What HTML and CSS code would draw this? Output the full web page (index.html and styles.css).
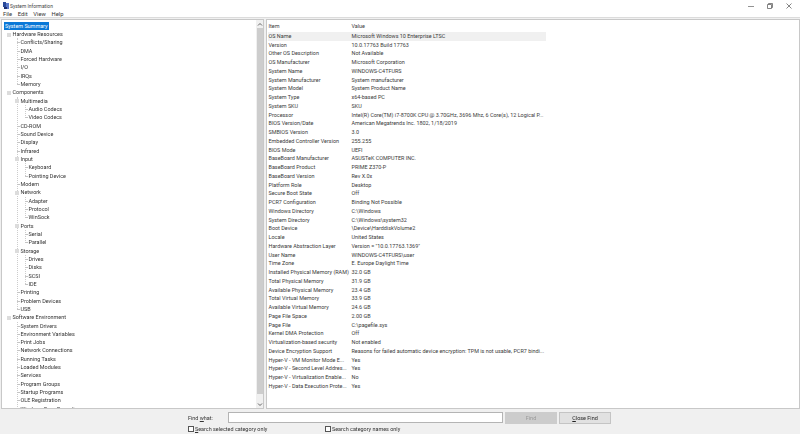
FILE: index.html
```html
<!DOCTYPE html>
<html lang="en">
<head>
<meta charset="utf-8">
<title>System Information</title>
<link rel="stylesheet" href="styles.css">
</head>
<body>
<div class="window">
  <header class="titlebar">
    <svg class="app-icon" width="6" height="7" viewBox="0 0 6 7"><rect x="0" y="0" width="3" height="5" fill="#2a4a9a"/><rect x="3" y="1" width="3" height="6" fill="#5a78c8"/><rect x="1" y="5" width="3" height="2" fill="#1c2f70"/></svg>
    <span class="title">System Information</span>
    <div class="controls">
      <svg width="6" height="6" viewBox="0 0 6 6"><path d="M0 3.500H6" stroke="#777" stroke-width=".8"/></svg>
      <svg width="6" height="6" viewBox="0 0 6 6"><path d="M.5 1.500h4v4h-4zM1.500 1.500v-1h4v4h-1" fill="none" stroke="#666" stroke-width=".8"/></svg>
      <svg width="6" height="6" viewBox="0 0 6 6"><path d="M.5.5l5 5M5.500.5l-5 5" stroke="#666" stroke-width=".8"/></svg>
    </div>
  </header>
  <nav class="menu"><span>File</span><span>Edit</span><span>View</span><span>Help</span></nav>
  <main class="panes">
    <section class="tree-pane">
      <div class="tree">
        <div class="node selected-row"><span class="selected">System Summary</span></div>
        <div class="node l1 exp">Hardware Resources</div>
        <div class="group g1">
          <div class="node l2">Conflicts/Sharing</div>
          <div class="node l2">DMA</div>
          <div class="node l2">Forced Hardware</div>
          <div class="node l2">I/O</div>
          <div class="node l2">IRQs</div>
          <div class="node l2">Memory</div>
        </div>
        <div class="node l1 exp">Components</div>
        <div class="group g1">
          <div class="node l2 exp">Multimedia</div>
          <div class="group g2">
            <div class="node l3">Audio Codecs</div>
            <div class="node l3">Video Codecs</div>
          </div>
          <div class="node l2">CD-ROM</div>
          <div class="node l2">Sound Device</div>
          <div class="node l2">Display</div>
          <div class="node l2">Infrared</div>
          <div class="node l2 exp">Input</div>
          <div class="group g2">
            <div class="node l3">Keyboard</div>
            <div class="node l3">Pointing Device</div>
          </div>
          <div class="node l2">Modem</div>
          <div class="node l2 exp">Network</div>
          <div class="group g2">
            <div class="node l3">Adapter</div>
            <div class="node l3">Protocol</div>
            <div class="node l3">WinSock</div>
          </div>
          <div class="node l2 exp">Ports</div>
          <div class="group g2">
            <div class="node l3">Serial</div>
            <div class="node l3">Parallel</div>
          </div>
          <div class="node l2 exp">Storage</div>
          <div class="group g2">
            <div class="node l3">Drives</div>
            <div class="node l3">Disks</div>
            <div class="node l3">SCSI</div>
            <div class="node l3">IDE</div>
          </div>
          <div class="node l2">Printing</div>
          <div class="node l2">Problem Devices</div>
          <div class="node l2">USB</div>
        </div>
        <div class="node l1 exp">Software Environment</div>
        <div class="group g1">
          <div class="node l2">System Drivers</div>
          <div class="node l2">Environment Variables</div>
          <div class="node l2">Print Jobs</div>
          <div class="node l2">Network Connections</div>
          <div class="node l2">Running Tasks</div>
          <div class="node l2">Loaded Modules</div>
          <div class="node l2">Services</div>
          <div class="node l2">Program Groups</div>
          <div class="node l2">Startup Programs</div>
          <div class="node l2">OLE Registration</div>
          <div class="node l2">Windows Error Reporting</div>
        </div>
      </div>
      <div class="scrollbar">
        <svg width="6" height="5" viewBox="0 0 6 5"><path d="M1 3.500L3 1.500L5 3.500" fill="none" stroke="#555" stroke-width=".9"/></svg>
        <div class="thumb"></div>
        <svg width="6" height="5" viewBox="0 0 6 5"><path d="M1 1.500L3 3.500L5 1.500" fill="none" stroke="#555" stroke-width=".9"/></svg>
      </div>
    </section>
    <section class="list-pane">
      <div class="list">
        <div class="row head"><span>Item</span><span>Value</span></div>
        <div class="row sel"><span>OS Name</span><span>Microsoft Windows 10 Enterprise LTSC</span></div>
        <div class="row"><span>Version</span><span>10.0.17763 Build 17763</span></div>
        <div class="row"><span>Other OS Description</span><span>Not Available</span></div>
        <div class="row"><span>OS Manufacturer</span><span>Microsoft Corporation</span></div>
        <div class="row"><span>System Name</span><span>WINDOWS-C4TFURS</span></div>
        <div class="row"><span>System Manufacturer</span><span>System manufacturer</span></div>
        <div class="row"><span>System Model</span><span>System Product Name</span></div>
        <div class="row"><span>System Type</span><span>x64-based PC</span></div>
        <div class="row"><span>System SKU</span><span>SKU</span></div>
        <div class="row"><span>Processor</span><span>Intel(R) Core(TM) i7-8700K CPU @ 3.70GHz, 3696 Mhz, 6 Core(s), 12 Logical P...</span></div>
        <div class="row"><span>BIOS Version/Date</span><span>American Megatrends Inc. 1802, 1/18/2019</span></div>
        <div class="row"><span>SMBIOS Version</span><span>3.0</span></div>
        <div class="row"><span>Embedded Controller Version</span><span>255.255</span></div>
        <div class="row"><span>BIOS Mode</span><span>UEFI</span></div>
        <div class="row"><span>BaseBoard Manufacturer</span><span>ASUSTeK COMPUTER INC.</span></div>
        <div class="row"><span>BaseBoard Product</span><span>PRIME Z370-P</span></div>
        <div class="row"><span>BaseBoard Version</span><span>Rev X.0x</span></div>
        <div class="row"><span>Platform Role</span><span>Desktop</span></div>
        <div class="row"><span>Secure Boot State</span><span>Off</span></div>
        <div class="row"><span>PCR7 Configuration</span><span>Binding Not Possible</span></div>
        <div class="row"><span>Windows Directory</span><span>C:\Windows</span></div>
        <div class="row"><span>System Directory</span><span>C:\Windows\system32</span></div>
        <div class="row"><span>Boot Device</span><span>\Device\HarddiskVolume2</span></div>
        <div class="row"><span>Locale</span><span>United States</span></div>
        <div class="row"><span>Hardware Abstraction Layer</span><span>Version = "10.0.17763.1369"</span></div>
        <div class="row"><span>User Name</span><span>WINDOWS-C4TFURS\user</span></div>
        <div class="row"><span>Time Zone</span><span>E. Europe Daylight Time</span></div>
        <div class="row"><span>Installed Physical Memory (RAM)</span><span>32.0 GB</span></div>
        <div class="row"><span>Total Physical Memory</span><span>31.9 GB</span></div>
        <div class="row"><span>Available Physical Memory</span><span>23.4 GB</span></div>
        <div class="row"><span>Total Virtual Memory</span><span>33.9 GB</span></div>
        <div class="row"><span>Available Virtual Memory</span><span>24.6 GB</span></div>
        <div class="row"><span>Page File Space</span><span>2.00 GB</span></div>
        <div class="row"><span>Page File</span><span>C:\pagefile.sys</span></div>
        <div class="row"><span>Kernel DMA Protection</span><span>Off</span></div>
        <div class="row"><span>Virtualization-based security</span><span>Not enabled</span></div>
        <div class="row"><span>Device Encryption Support</span><span>Reasons for failed automatic device encryption: TPM is not usable, PCR7 bindi...</span></div>
        <div class="row"><span>Hyper-V - VM Monitor Mode E...</span><span>Yes</span></div>
        <div class="row"><span>Hyper-V - Second Level Addres...</span><span>Yes</span></div>
        <div class="row"><span>Hyper-V - Virtualization Enable...</span><span>No</span></div>
        <div class="row"><span>Hyper-V - Data Execution Prote...</span><span>Yes</span></div>
      </div>
    </section>
  </main>
  <footer class="find">
    <div class="find-top">
      <label class="find-label" for="q">Find <u>w</u>hat:</label>
      <input class="find-input" id="q" type="text">
      <div class="btn disabled">Find</div>
      <div class="btn"><span><u>C</u>lose Find</span></div>
    </div>
    <div class="find-checks">
      <span class="check first"><i class="box"></i><span><u>S</u>earch selected category only</span></span>
      <span class="check"><i class="box"></i><span>Search category names only</span></span>
    </div>
  </footer>
</div>
</body>
</html>
```
FILE: styles.css
```css
* { box-sizing: border-box; }
html, body { margin: 0; padding: 0; }
body {
  width: 800px;
  height: 434px;
  overflow: hidden;
  background: #f0f0f0;
  font-family: Roboto, "Open Sans", "Liberation Sans", sans-serif;
  font-size: 5.450px;
  color: #333;
}
.window { width: 800px; height: 434px; display: flex; flex-direction: column; filter: blur(.25px); }
.titlebar {
  height: 10px;
  background: #fff;
  display: flex;
  align-items: center;
  padding: 1px 8px 0 3px;
  flex: none;
}
.app-icon { margin-right: 1px; flex: none; }
.title { color: #444; font-size: 4.900px; }
.controls { margin-left: auto; display: flex; gap: 13px; }
.menu {
  height: 8px;
  background: #fff;
  display: flex;
  align-items: center;
  padding: 0 0 0 3px;
  gap: 5.700px;
  flex: none;
  font-size: 5.800px;
  border-bottom: 1px solid #dcdcdc;
}
.panes { height: 391px; display: flex; padding: 1px 0 0 1px; flex: none; }
.tree-pane {
  width: 263px;
  background: #fff;
  border: 1px solid #c8c8c8;
  display: flex;
  overflow: hidden;
  flex: none;
}
.tree { flex: 1; padding: 1.700px 0 0 2px; overflow: hidden; }
.node {
  height: 8.330px;
  line-height: 8.330px;
  white-space: nowrap;
  position: relative;
}
.selected {
  display: inline-block;
  background: #0a78d7;
  color: #fff;
  padding: 0 1px;
  height: 8px;
  line-height: 8px;
}
.l1 { padding-left: 8.500px; }
.l2 { padding-left: 16.500px; }
.l3 { padding-left: 24.500px; }
.l2::before, .l3::before {
  content: "";
  position: absolute;
  top: 4px;
  width: 2px;
  border-top: 1px dotted #c4c4c4;
}
.l2::before { left: 13px; }
.l3::before { left: 21px; }
.exp::after {
  content: "";
  position: absolute;
  top: 2.500px;
  width: 4px;
  height: 4px;
  background: #dcdcdc;
}
.l1.exp::after { left: 2.500px; }
.l2.exp::after { left: 10.500px; }
.l2.exp::before { display: none; }
.group { position: relative; }
.group::before {
  content: "";
  position: absolute;
  top: 0;
  bottom: 4px;
  border-left: 1px dotted #ccc;
}
.g1::before { left: 13px; }
.g2::before { left: 21px; }
.scrollbar {
  width: 7px;
  background: #f0f0f0;
  display: flex;
  flex-direction: column;
  align-items: center;
  padding: 2px 0 1px;
  gap: 1px;
  flex: none;
}
.scrollbar svg { flex: none; }
.thumb { flex: 1; width: 6px; background: #cdcdcd; margin-bottom: 7px; }
.list-pane {
  flex: 1;
  margin-left: 2px;
  background: #fff;
  border: 1px solid #c8c8c8;
  padding: 2px 0 0 1px;
  overflow: hidden;
}
.list { width: 278px; }
.row {
  display: grid;
  grid-template-columns: 83px 1fr;
  height: 8.760px;
  line-height: 8.760px;
  padding-left: .5px;
  white-space: nowrap;
  color: #3a3a3a;
}
.row.head { height: 9.800px; line-height: 9.800px; }
.row.sel { background: #f0f0f0; }
.find { flex: 1; display: flex; flex-direction: column; padding: 2px 0 0 188px; }
.find-top { display: flex; align-items: center; height: 13px; }
.find-label { width: 40px; flex: none; }
.find-input {
  width: 275px;
  height: 10.500px;
  padding: 0;
  background: #fff;
  border: 1px solid #b4b4b4;
  flex: none;
  margin-right: 2px;
}
.btn {
  width: 52px;
  height: 12px;
  margin-right: 2px;
  background: #e1e1e1;
  border: 1px solid #c4c4c4;
  display: flex;
  align-items: center;
  justify-content: center;
  flex: none;
  color: #222;
}
.btn.disabled { background: #ccc; border-color: #ccc; color: #999; }
.find-checks { display: flex; margin-top: 0.500px; }
.check { display: flex; align-items: center; gap: 1px; line-height: 8px; }
.check.first { width: 137px; }
.box { width: 6px; height: 6px; border: 1px solid #555; background: #fff; display: block; flex: none; }
```
